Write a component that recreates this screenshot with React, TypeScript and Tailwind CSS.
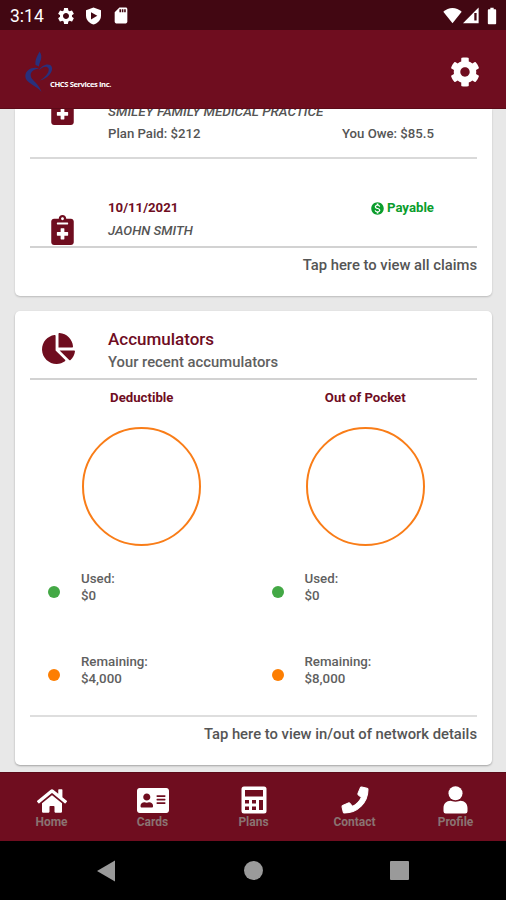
import React from 'react';
import { FaAddressCard, FaChartPie, FaCog, FaHome, FaNotesMedical, FaPhone } from 'react-icons/fa';
import { MdBatteryFull, MdMonetizationOn, MdSdCard, MdSettings } from 'react-icons/md';

interface Accumulator {
    title: string;
    used: string;
    remaining: string;
}

const accumulators: Accumulator[] = [
    { title: 'Deductible', used: '$0', remaining: '$4,000' },
    { title: 'Out of Pocket', used: '$0', remaining: '$8,000' },
];

function CalculatorIcon() {
    return (
        <svg className="w-[26px] h-[28px]" viewBox="0 0 26 28">
            <rect x="0.5" y="0.5" width="25" height="27" rx="2.5" fill="white" />
            <g fill="#6f0d1f">
                <rect x="4" y="4" width="18" height="6.5" />
                <rect x="4" y="14" width="4" height="3.5" />
                <rect x="11" y="14" width="4" height="3.5" />
                <rect x="4" y="20.5" width="4" height="3.5" />
                <rect x="11" y="20.5" width="4" height="3.5" />
                <rect x="18" y="14" width="4" height="10" />
            </g>
        </svg>
    );
}

function ProfileIcon() {
    return (
        <svg className="w-[25px] h-[28px]" viewBox="0 0 25 28">
            <circle cx="12.5" cy="7.2" r="7" fill="white" />
            <path d="M7.5 14.8 C9 15.9 16 15.9 17.5 14.8 C21.5 14.8 24.5 17.8 24.5 22 V25.3 Q24.5 27.5 22.3 27.5 H2.7 Q0.5 27.5 0.5 25.3 V22 C0.5 17.8 3.5 14.8 7.5 14.8 Z" fill="white" />
        </svg>
    );
}

const tabs = [
    { label: 'Home', icon: <FaHome className="mt-[2px] w-[30px] h-[28px]" /> },
    { label: 'Cards', icon: <FaAddressCard className="mt-[2px] w-[32px] h-[29px]" /> },
    { label: 'Plans', icon: <CalculatorIcon /> },
    { label: 'Contact', icon: <FaPhone className="w-[26px] h-[26px] overflow-visible stroke-white stroke-[20px]" /> },
    { label: 'Profile', icon: <ProfileIcon /> },
];

function StatusBar() {
    return (
        <div className="h-[30px] shrink-0 bg-[#420712] flex items-center justify-between pl-[10px] pr-[4px] pt-[1px] text-white">
            <div className="flex items-center">
                <span className="w-[46px] pt-[2px] text-[17.5px] leading-none">3:14</span>
                <MdSettings className="w-[20px] h-[20px]" />
                <svg className="ml-[9px] w-[17px] h-[18px]" viewBox="0 0 17 18">
                    <path d="M8.5 0.5 L16 3.2 V8.5 C16 13 12.8 16.3 8.5 17.6 C4.2 16.3 1 13 1 8.5 V3.2 Z" fill="white" />
                    <path d="M6 5.2 L12.3 8.8 L6 12.4 Z" fill="#420712" />
                </svg>
                <MdSdCard className="ml-[9px] w-[20px] h-[19px]" />
            </div>
            <div className="flex items-center">
                <svg className="w-[19px] h-[17px]" viewBox="0 0 19 17">
                    <path d="M0.3 4.8 C5.5 -0.3 13.5 -0.3 18.7 4.8 L9.5 16.2 Z" fill="white" />
                </svg>
                <svg className="ml-[1px] w-[16px] h-[17px]" viewBox="0 0 16 17">
                    <path d="M15.6 0.5 V16.2 H0 Z" fill="white" />
                    <path d="M11.3 6 H13.6 V13.5 H11.3 Z" fill="#420712" />
                </svg>
                <MdBatteryFull className="ml-[3px] w-[20px] h-[20px]" />
            </div>
        </div>
    );
}

function Header() {
    return (
        <header className="h-[79px] shrink-0 bg-[#6f0d1f] border-b border-[#5b0a18] flex items-center justify-between pl-[24px] pr-[26px] pt-[5px]">
            <div className="flex items-end">
                <svg className="w-[29px] h-[42px]" viewBox="0 0 29 42">
                    <g fill="#29307c">
                        <path d="M15.5 0.5 C17.5 3 17.8 6 16.8 9 C16 11.5 15 13 15 15.5 L11.5 14 C11 10 12 8 13 5.5 C13.8 3.5 14.8 2.5 15.5 0.5 Z" />
                        <path d="M15 17.5 C9 15.2 1.5 18.5 1.3 25 C1.1 32 12 34 17.5 41 C15.5 35.5 12.5 32.5 9.5 29.5 C4.8 25 5.5 18.8 15 17.5 Z" />
                        <path d="M15 19.5 C17.5 13.5 26 11.5 27.8 16 C29.5 21 23.5 27.5 16 29.5 C21.5 26 25.8 21 24.5 17.5 C23.2 14.5 18 15.5 15 19.5 Z" />
                    </g>
                </svg>
                <span className="-ml-[3px] mb-[4px] whitespace-nowrap font-['Open_Sans',sans-serif] text-[7.6px] font-bold leading-[10px] tracking-[-0.4px] text-white">
                    CHCS Services Inc.
                </span>
            </div>
            <FaCog className="w-[30px] h-[30px] text-white" />
        </header>
    );
}

function ClaimsCard() {
    return (
        <section className="h-[187px] shrink-0 bg-white rounded-b-[5px] shadow-[0_1px_2px_rgba(0,0,0,0.2)] px-[15px] overflow-hidden text-[13.2px] leading-[16px] font-medium text-[#555]">
            <div className="h-[50px] border-b-2 border-[#d9d9d9] flex">
                <div className="w-[78px] pl-[20px]">
                    <FaNotesMedical className="-mt-[14px] w-[25px] h-[30px] text-[#6f0d1f]" />
                </div>
                <div className="flex-1 pr-[43px]">
                    <p className="-mt-[6px] text-[13.5px] italic">SMILEY FAMILY MEDICAL PRACTICE</p>
                    <div className="mt-[7px] flex justify-between">
                        <span>Plan Paid: $212</span>
                        <span>You Owe: $85.5</span>
                    </div>
                </div>
            </div>
            <div className="h-[89px] border-b-2 border-[#d2d2d2] flex">
                <div className="w-[78px] pl-[20px] pt-[56px]">
                    <FaNotesMedical className="w-[25px] h-[30px] text-[#6f0d1f]" />
                </div>
                <div className="flex-1 pr-[43px] pt-[41px]">
                    <div className="flex justify-between font-bold">
                        <span className="text-[#6f0d1f]">10/11/2021</span>
                        <span className="flex items-center gap-[2px] text-[#0a9d2c]">
                            <MdMonetizationOn className="w-[15px] h-[15px]" />
                            Payable
                        </span>
                    </div>
                    <p className="mt-[7px] italic">JAOHN SMITH</p>
                </div>
            </div>
            <p className="pt-[7px] text-right text-[14.8px] leading-[20px]">Tap here to view all claims</p>
        </section>
    );
}

function LegendRow({ color, label, value }: { color: string; label: string; value: string }) {
    return (
        <div className="flex h-[83px] items-start text-[13.3px] leading-[16.5px] font-medium text-[#606060]">
            <span className={`mt-[15px] ml-[18px] mr-[21px] size-[12px] rounded-full ${color}`} />
            <div>
                <p>{label}</p>
                <p>{value}</p>
            </div>
        </div>
    );
}

function AccumulatorsCard() {
    return (
        <section className="mt-[15px] h-[454px] shrink-0 bg-white rounded-[5px] shadow-[0_1px_2px_rgba(0,0,0,0.3)] px-[15px]">
            <div className="h-[69px] border-b-2 border-[#d2d2d2] flex">
                <div className="w-[78px] pl-[12px] pt-[22px]">
                    <FaChartPie className="w-[33px] h-[31px] text-[#6f0d1f]" />
                </div>
                <div className="pt-[18px]">
                    <h2 className="text-[17px] leading-[20px] font-medium text-[#6f0d1f]">Accumulators</h2>
                    <p className="mt-[3px] text-[14.8px] leading-[20px] font-medium text-[#606060]">Your recent accumulators</p>
                </div>
            </div>
            <div className="h-[337px] border-b-2 border-[#dedede] grid grid-cols-2">
                {accumulators.map((item) => (
                    <div key={item.title}>
                        <h3 className="pt-[10px] text-center text-[13.2px] leading-[16px] font-bold text-[#6f0d1f]">{item.title}</h3>
                        <div className="mx-auto mt-[21px] size-[119px] rounded-full border-2 border-[#f97d18]" />
                        <div className="pt-[25px]">
                            <LegendRow color="bg-[#43a845]" label="Used:" value={item.used} />
                            <LegendRow color="bg-[#fd7e02]" label="Remaining:" value={item.remaining} />
                        </div>
                    </div>
                ))}
            </div>
            <p className="pt-[7px] text-right text-[14.8px] leading-[20px] font-medium text-[#555]">
                Tap here to view in/out of network details
            </p>
        </section>
    );
}

function TabBar() {
    return (
        <nav className="h-[69px] shrink-0 bg-[#6f0d1f] border-t border-[#5b0a18] grid grid-cols-5 pt-[12px] pl-px">
            {tabs.map((tab) => (
                <div key={tab.label} className="flex flex-col items-center">
                    <div className="h-[29px] flex items-center text-white">{tab.icon}</div>
                    <span className="text-[12px] leading-[17px] font-bold text-[#8a7372]">{tab.label}</span>
                </div>
            ))}
        </nav>
    );
}

function SystemNav() {
    return (
        <div className="h-[59px] shrink-0 bg-black flex items-center justify-between px-[97px]">
            <svg className="w-[18px] h-[22px]" viewBox="0 0 18 22">
                <path d="M18 0.5 V21.5 L0 11 Z" fill="#9a9a9a" />
            </svg>
            <span className="ml-[2px] size-[19px] rounded-full bg-[#9a9a9a]" />
            <span className="size-[19px] rounded-[1px] bg-[#9a9a9a]" />
        </div>
    );
}

export default function App() {
    return (
        <div className="w-[506px] h-[900px] overflow-hidden flex flex-col bg-[#e8e8e8] font-[Roboto,sans-serif]">
            <StatusBar />
            <Header />
            <main className="flex-1 min-h-0 overflow-hidden flex flex-col pl-[15px] pr-[14px]">
                <ClaimsCard />
                <AccumulatorsCard />
            </main>
            <TabBar />
            <SystemNav />
        </div>
    );
}
